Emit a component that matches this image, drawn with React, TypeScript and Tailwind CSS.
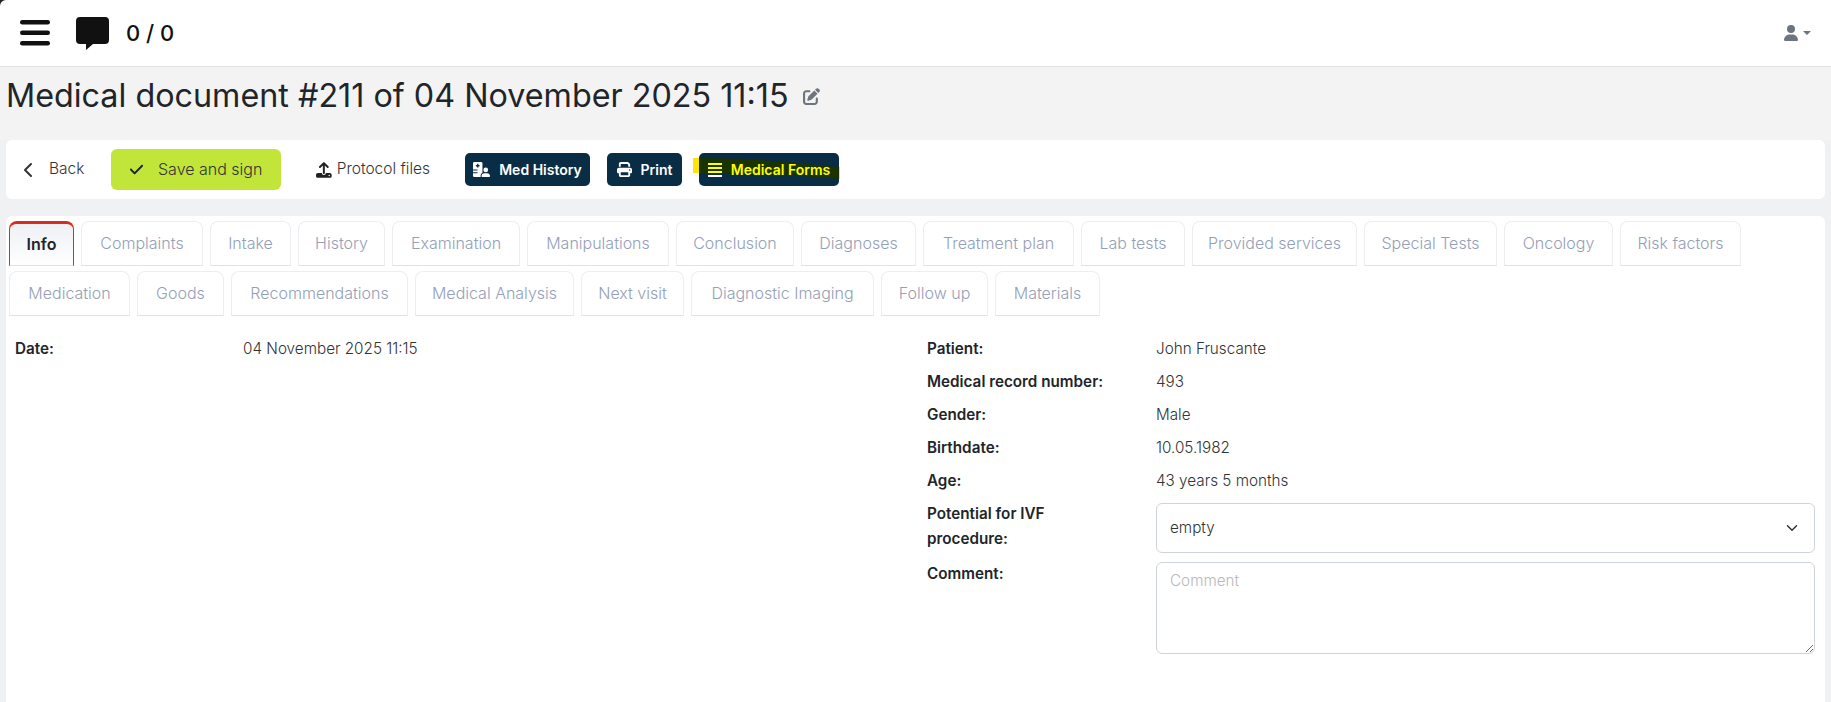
import { FaCheck, FaPenToSquare, FaHospitalUser, FaPrint, FaUpload, FaUser } from "react-icons/fa6";
import { ChevronDown, ChevronLeft } from "lucide-react";

const TABS_ONE = [
  ["Complaints", "w-[122px]"],
  ["Intake", "w-[81px]"],
  ["History", "w-[87px]"],
  ["Examination", "w-[128px]"],
  ["Manipulations", "w-[142px]"],
  ["Conclusion", "w-[118px]"],
  ["Diagnoses", "w-[115px]"],
  ["Treatment plan", "w-[151px]"],
  ["Lab tests", "w-[104px]"],
  ["Provided services", "w-[165px]"],
  ["Special Tests", "w-[133px]"],
  ["Oncology", "w-[109px]"],
  ["Risk factors", "w-[121px]"],
];
const TABS_TWO = [
  ["Medication", "w-[121px]"],
  ["Goods", "w-[87px]"],
  ["Recommendations", "w-[177px]"],
  ["Medical Analysis", "w-[159px]"],
  ["Next visit", "w-[103px]"],
  ["Diagnostic Imaging", "w-[183px]"],
  ["Follow up", "w-[107px]"],
  ["Materials", "w-[105px]"],
];
const RIGHT_ROWS = [
  ["Patient:", "John Fruscante"],
  ["Medical record number:", "493"],
  ["Gender:", "Male"],
  ["Birthdate:", "10.05.1982"],
  ["Age:", "43 years 5 months"],
];

function Tab({ label, width }: { label: string; width: string }) {
  return (
    <div className={`${width} h-[45px] rounded-t-[8px] border border-[#eceef1] border-b-[#e0e2e8] pt-[9px] text-center text-[16px] font-light text-[#95a0b8]`}>
      {label}
    </div>
  );
}

export default function App() {
  return (
    <div className="relative h-[702px] overflow-hidden bg-[#f0f1f3] font-['Inter',sans-serif] text-[#212529]">
      <svg width="6" height="6" viewBox="0 0 6 6" className="absolute top-0 left-0">
        <path d="M0 0h6a6 6 0 0 0-6 6z" fill="#222" />
      </svg>
      <header className="flex h-[67px] items-center border-b border-[#e2e2e2] bg-white pr-[20px] pl-[20px]">
        <svg width="30" height="26" viewBox="0 0 30 26" className="text-[#111]">
          <rect x="0" y="0" width="30" height="4.5" rx="2.2" fill="currentColor" />
          <rect x="0" y="10.5" width="30" height="4.5" rx="2.2" fill="currentColor" />
          <rect x="0" y="21" width="30" height="4.5" rx="2.2" fill="currentColor" />
        </svg>
        <svg width="33" height="33" viewBox="0 0 33 33" className="ml-[26px] text-[#111]">
          <path d="M4 0h25a4 4 0 0 1 4 4v19a4 4 0 0 1-4 4H17l-7 6v-6H4a4 4 0 0 1-4-4V4a4 4 0 0 1 4-4z" fill="currentColor" />
        </svg>
        <div className="ml-[17px] text-[22px] font-medium text-[#111]">0 / 0</div>
        <div className="ml-auto flex items-center gap-[4px] text-[#6c757d]">
          <FaUser size={16} />
          <div className="h-0 w-0 border-x-[4px] border-t-[4px] border-x-transparent border-t-[#6c757d]" />
        </div>
      </header>

      <div className="flex h-[73px] items-center bg-[#f3f3f3] pb-[15px] pl-[6px]">
        <h1 className="text-[32.3px] leading-none font-normal text-[#212529]">Medical document #211 of 04 November 2025 11:15</h1>
        <FaPenToSquare size={17} className="ml-[14px] text-[#6c757d]" />
      </div>

      <div className="mx-[6px] flex h-[59px] items-center rounded-[6px] bg-white pl-[10px]">
        <ChevronLeft size={24} className="text-[#333]" />
        <span className="ml-[9px] w-[37px] pb-[1px] text-[15.5px] font-light text-[#333]">Back</span>
        <button className="ml-[25px] flex h-[41px] w-[170px] items-center rounded-[6px] bg-[#c2e53a] pl-[18px] text-[16px] font-light text-[#333]">
          <FaCheck size={15} className="text-[#222]" />
          <span className="ml-[14px] pb-[1px]">Save and sign</span>
        </button>
        <div className="ml-[35px] flex w-[114px] items-center text-[15.5px] font-light whitespace-nowrap text-[#333]">
          <FaUpload size={16} className="text-[#222]" />
          <span className="ml-[5px] pb-[1px]">Protocol files</span>
        </div>
        <button className="ml-[35px] flex h-[33px] w-[125px] items-center justify-center gap-[9px] rounded-[5px] bg-[#0a2d46] text-[14px] font-semibold text-white">
          <FaHospitalUser size={17} />
          Med History
        </button>
        <button className="ml-[17px] flex h-[33px] w-[75px] items-center justify-center gap-[9px] rounded-[5px] bg-[#0a2d46] text-[14px] font-semibold text-white">
          <FaPrint size={15} />
          Print
        </button>
        <button className="relative ml-[17px] flex h-[33px] w-[140px] items-center justify-center gap-[9px] rounded-[5px] bg-[#0a2d46] text-[14px] font-semibold text-[#ffff00]">
          <svg width="147" height="24" viewBox="0 0 147 24" className="absolute top-[5px] left-[-6px]">
            <path d="M0 0h6v15H0z" fill="#ffe600" />
            <path d="M6 0l48 1 92 8v12l-48-4-92-2z" fill="#1a3300" />
            <path d="M146 9h1v12h-1z" fill="#ffe600" />
          </svg>
          <svg width="14" height="14" viewBox="0 0 14 14" className="relative">
            <rect y="0" width="14" height="2" fill="#ffff00" />
            <rect y="4" width="14" height="2" fill="#ffff00" />
            <rect y="8" width="14" height="2" fill="#ffff00" />
            <rect y="12" width="14" height="2" fill="#fff" />
          </svg>
          <span className="relative">Medical Forms</span>
        </button>
      </div>

      <main className="mx-[6px] mt-[17px] h-[486px] rounded-t-[6px] bg-white pt-[5px]">
        <div className="flex gap-[7px] pl-[3px]">
          <div className="h-[45px] w-[65px] rounded-t-[8px] border border-t-[3px] border-[#d92c20] border-b-[#e0e2e8] bg-gradient-to-b from-[#eef0f4] to-white pt-[8px] text-center text-[16px] font-semibold text-[#212529]">
            Info
          </div>
          {TABS_ONE.map(([t, w]) => (
            <Tab key={t} label={t} width={w} />
          ))}
        </div>
        <div className="mt-[5px] flex gap-[7px] pl-[3px]">
          {TABS_TWO.map(([t, w]) => (
            <Tab key={t} label={t} width={w} />
          ))}
        </div>

        <div className="mt-[22px] flex text-[15.25px]">
          <div className="flex w-[921px] pl-[9px]">
            <span className="w-[228px] font-semibold">Date:</span>
            <span className="font-light text-[#333]">04 November 2025 11:15</span>
          </div>
          <div className="flex-1 pr-[10px]">
            {RIGHT_ROWS.map(([k, v]) => (
              <div key={k} className="flex h-[33px]">
                <span className="w-[229px] font-semibold">{k}</span>
                <span className="font-light text-[#333]">{v}</span>
              </div>
            ))}
            <div className="flex">
              <span className="-mt-[2px] w-[229px] pr-[60px] leading-[25px] font-semibold">Potential for IVF procedure:</span>
              <div className="flex h-[50px] flex-1 items-center justify-between rounded-[6px] border border-[#ced4da] px-[13px] font-light text-[#333]">
                empty
                <ChevronDown size={18} className="text-[#333]" />
              </div>
            </div>
            <div className="mt-[9px] flex">
              <span className="w-[229px] pt-[1px] font-semibold">Comment:</span>
              <textarea placeholder="Comment" className="h-[92px] flex-1 rounded-[6px] border border-[#ced4da] px-[13px] py-[7px] font-light placeholder:text-[#b9b9b9]" />
            </div>
          </div>
        </div>
      </main>
    </div>
  );
}
